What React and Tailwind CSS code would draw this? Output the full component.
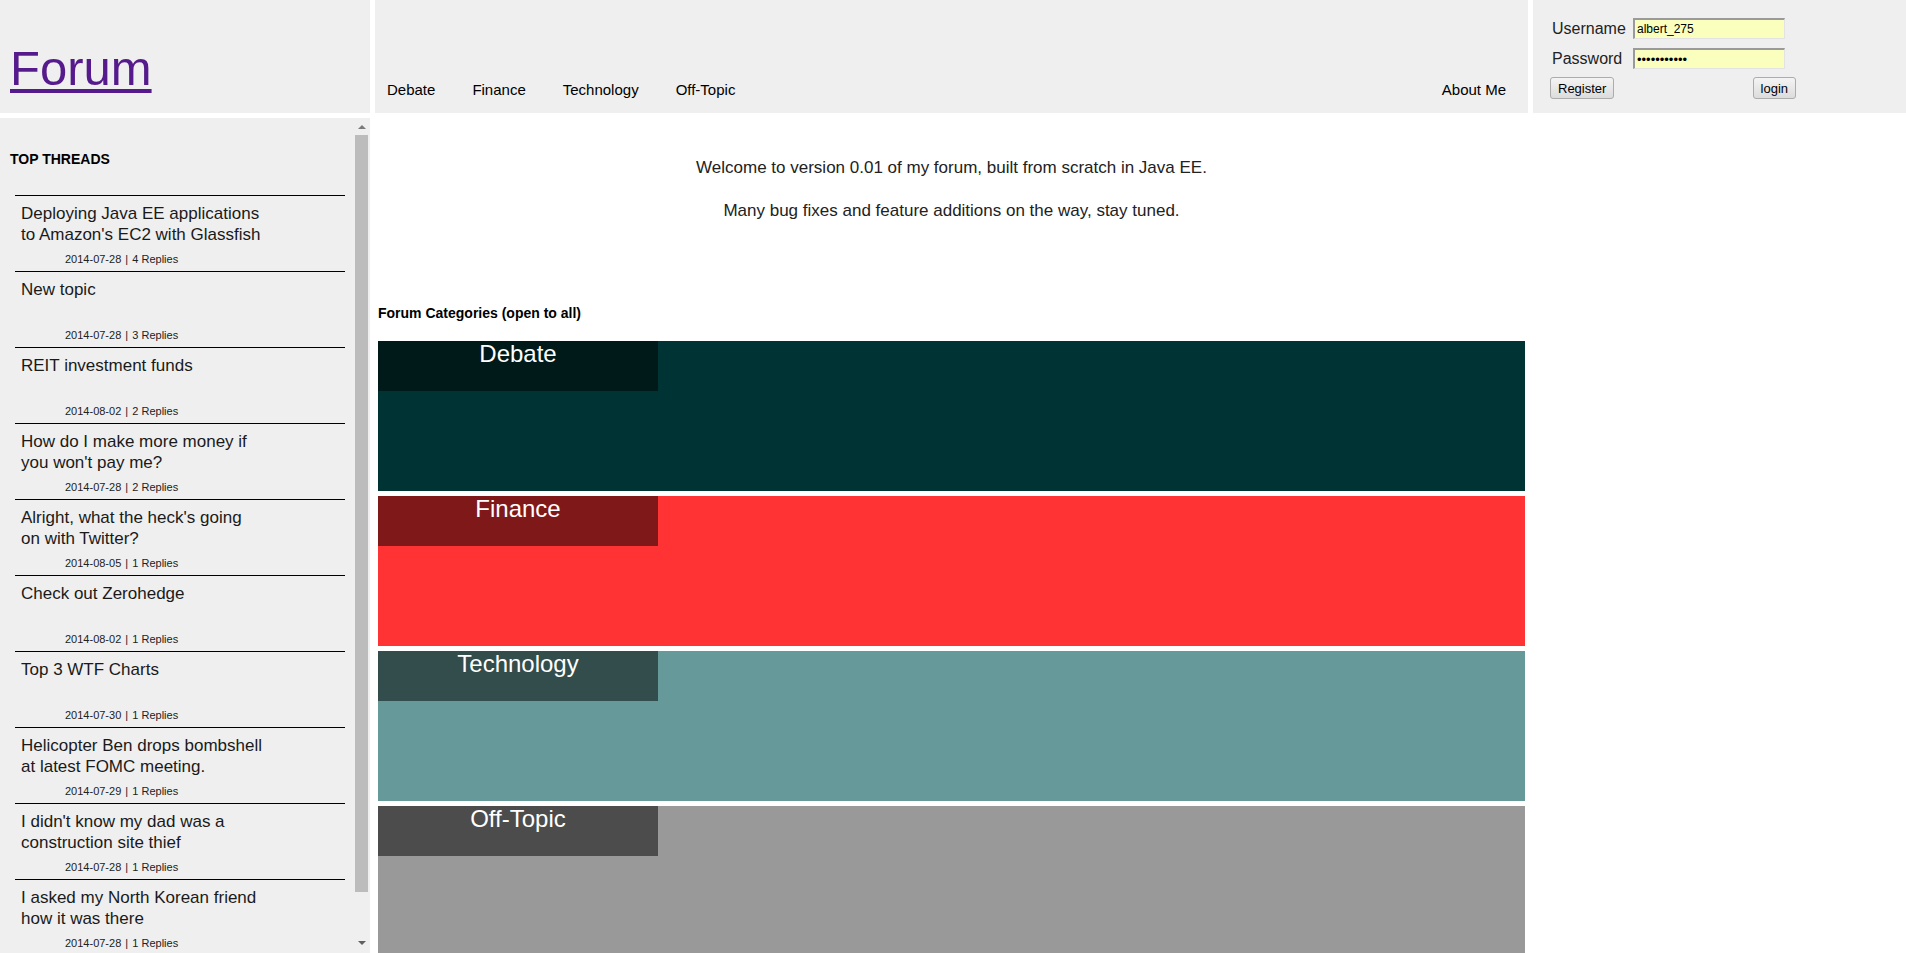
import React from 'react'

const threads = [
  { title: "Deploying Java EE applications to Amazon's EC2 with Glassfish", date: '2014-07-28', replies: 4 },
  { title: 'New topic', date: '2014-07-28', replies: 3 },
  { title: 'REIT investment funds', date: '2014-08-02', replies: 2 },
  { title: "How do I make more money if you won't pay me?", date: '2014-07-28', replies: 2 },
  { title: "Alright, what the heck's going on with Twitter?", date: '2014-08-05', replies: 1 },
  { title: 'Check out Zerohedge', date: '2014-08-02', replies: 1 },
  { title: 'Top 3 WTF Charts', date: '2014-07-30', replies: 1 },
  { title: 'Helicopter Ben drops bombshell at latest FOMC meeting.', date: '2014-07-29', replies: 1 },
  { title: "I didn't know my dad was a construction site thief", date: '2014-07-28', replies: 1 },
  { title: 'I asked my North Korean friend how it was there', date: '2014-07-28', replies: 1 },
]

const categories = [
  { name: 'Debate', bg: 'bg-[#003333]' },
  { name: 'Finance', bg: 'bg-[#ff3333]' },
  { name: 'Technology', bg: 'bg-[#669999]' },
  { name: 'Off-Topic', bg: 'bg-[#999999]' },
]

const navLinks = ['Debate', 'Finance', 'Technology', 'Off-Topic']

const inputClass =
  "w-[152px] h-[21px] bg-[#faffbd] border-t-2 border-l-2 border-b border-r border-t-[#9a9a9a] border-l-[#9a9a9a] border-b-[#e3e3e3] border-r-[#e3e3e3] px-[2px] text-black font-['Liberation_Sans',sans-serif] outline-none"

const buttonClass =
  "h-[22px] px-[7px] text-[13px] leading-none text-black font-['Liberation_Sans',sans-serif] border border-[#acacac] rounded-[3px] bg-gradient-to-b from-[#f4f4f4] to-[#dcdcdc]"

const LoginBox = () => (
  <div className="w-[373px] bg-[#efefef] pt-[18px] pl-[17px]">
    <div className="flex items-center h-[21px]">
      <label className="w-[83px] pl-[2px] text-[16px] text-[#222]">Username</label>
      <input defaultValue="albert_275" className={`${inputClass} text-[12px]`} />
    </div>
    <div className="flex items-center h-[21px] mt-[9px]">
      <label className="w-[83px] pl-[2px] text-[16px] text-[#222]">Password</label>
      <input type="password" defaultValue="albert_2750" className={`${inputClass} text-[13px]`} />
    </div>
    <div className="flex justify-between w-[246px] mt-[8px]">
      <button className={buttonClass}>Register</button>
      <button className={buttonClass}>login</button>
    </div>
  </div>
)

const ThreadItem = ({ thread }) => (
  <div className="h-[76px] border-t border-black flex flex-col justify-between">
    <a className="block w-[250px] pl-[6px] pt-[7px] text-[17px] leading-[21px] text-[#1a1a1a]">
      {thread.title}
    </a>
    <div className="pl-[50px] pb-[5px] text-[11px] leading-[14px] text-[#222]">
      {thread.date} <span className="px-[1px]">|</span> {thread.replies} Replies
    </div>
  </div>
)

// the sidebar's scrollbar, drawn since the page is shot without native scrollbars
const ScrollBar = () => (
  <div className="w-[17px] shrink-0 flex flex-col items-center">
    <div className="h-[17px] flex items-center justify-center">
      <div className="w-0 h-0 border-x-[4px] border-x-transparent border-b-[4px] border-b-[#7a7a7a]" />
    </div>
    <div className="w-[13px] h-[757px] bg-[#bcbcbc]" />
    <div className="mt-auto h-[17px] mb-[2px] flex items-center justify-center">
      <div className="w-0 h-0 border-x-[4px] border-x-transparent border-t-[4px] border-t-[#606060]" />
    </div>
  </div>
)

const App = () => {
  return (
    <div className="h-screen overflow-hidden flex flex-col bg-white font-['Century_Gothic','Liberation_Sans',Arial,sans-serif]">
      <header className="flex gap-[5px] h-[113px] shrink-0">
        <div className="w-[370px] bg-[#efefef] pt-[44px] pl-[10px]">
          <a href="#" className="text-[49px] leading-none text-[#551a8b] underline decoration-[4px] underline-offset-[4px]">
            Forum
          </a>
        </div>
        <nav className="flex-1 bg-[#efefef] flex pt-[80px] pl-[12px] pr-[22px]">
          <div className="flex gap-[37px] text-[15px] leading-[20px] text-black">
            {navLinks.map(link => (
              <a key={link} href="#">{link}</a>
            ))}
          </div>
          <a href="#" className="ml-auto text-[15px] leading-[20px] text-black">About Me</a>
        </nav>
        <LoginBox />
      </header>

      <div className="flex flex-1 min-h-0 mt-[5px]">
        <aside className="w-[370px] shrink-0 bg-[#efefef] flex">
          <div className="flex-1 overflow-hidden">
            <h2 className="pt-[32px] pl-[10px] text-[14px] leading-[18px] font-bold text-black">TOP THREADS</h2>
            <div className="ml-[15px] w-[330px] mt-[27px]">
              {threads.map((thread, i) => (
                <ThreadItem key={i} thread={thread} />
              ))}
            </div>
          </div>
          <ScrollBar />
        </aside>

        <main className="pl-[8px] w-[1155px]">
          <div className="pt-[40px] text-center text-[17px] leading-[20px] text-[#222]">
            <p>Welcome to version 0.01 of my forum, built from scratch in Java EE.</p>
            <p className="mt-[23px]">Many bug fixes and feature additions on the way, stay tuned.</p>
          </div>
          <h3 className="mt-[84px] text-[14px] leading-[16px] font-bold text-black">Forum Categories (open to all)</h3>
          <div className="mt-[20px] flex flex-col gap-[5px]">
            {categories.map(cat => (
              <div key={cat.name} className={`h-[150px] w-[1147px] ${cat.bg}`}>
                <div className="w-[280px] h-[50px] bg-black/50 text-center text-white text-[24px] leading-[26px]">
                  {cat.name}
                </div>
              </div>
            ))}
          </div>
        </main>
      </div>
    </div>
  )
}

export default App
